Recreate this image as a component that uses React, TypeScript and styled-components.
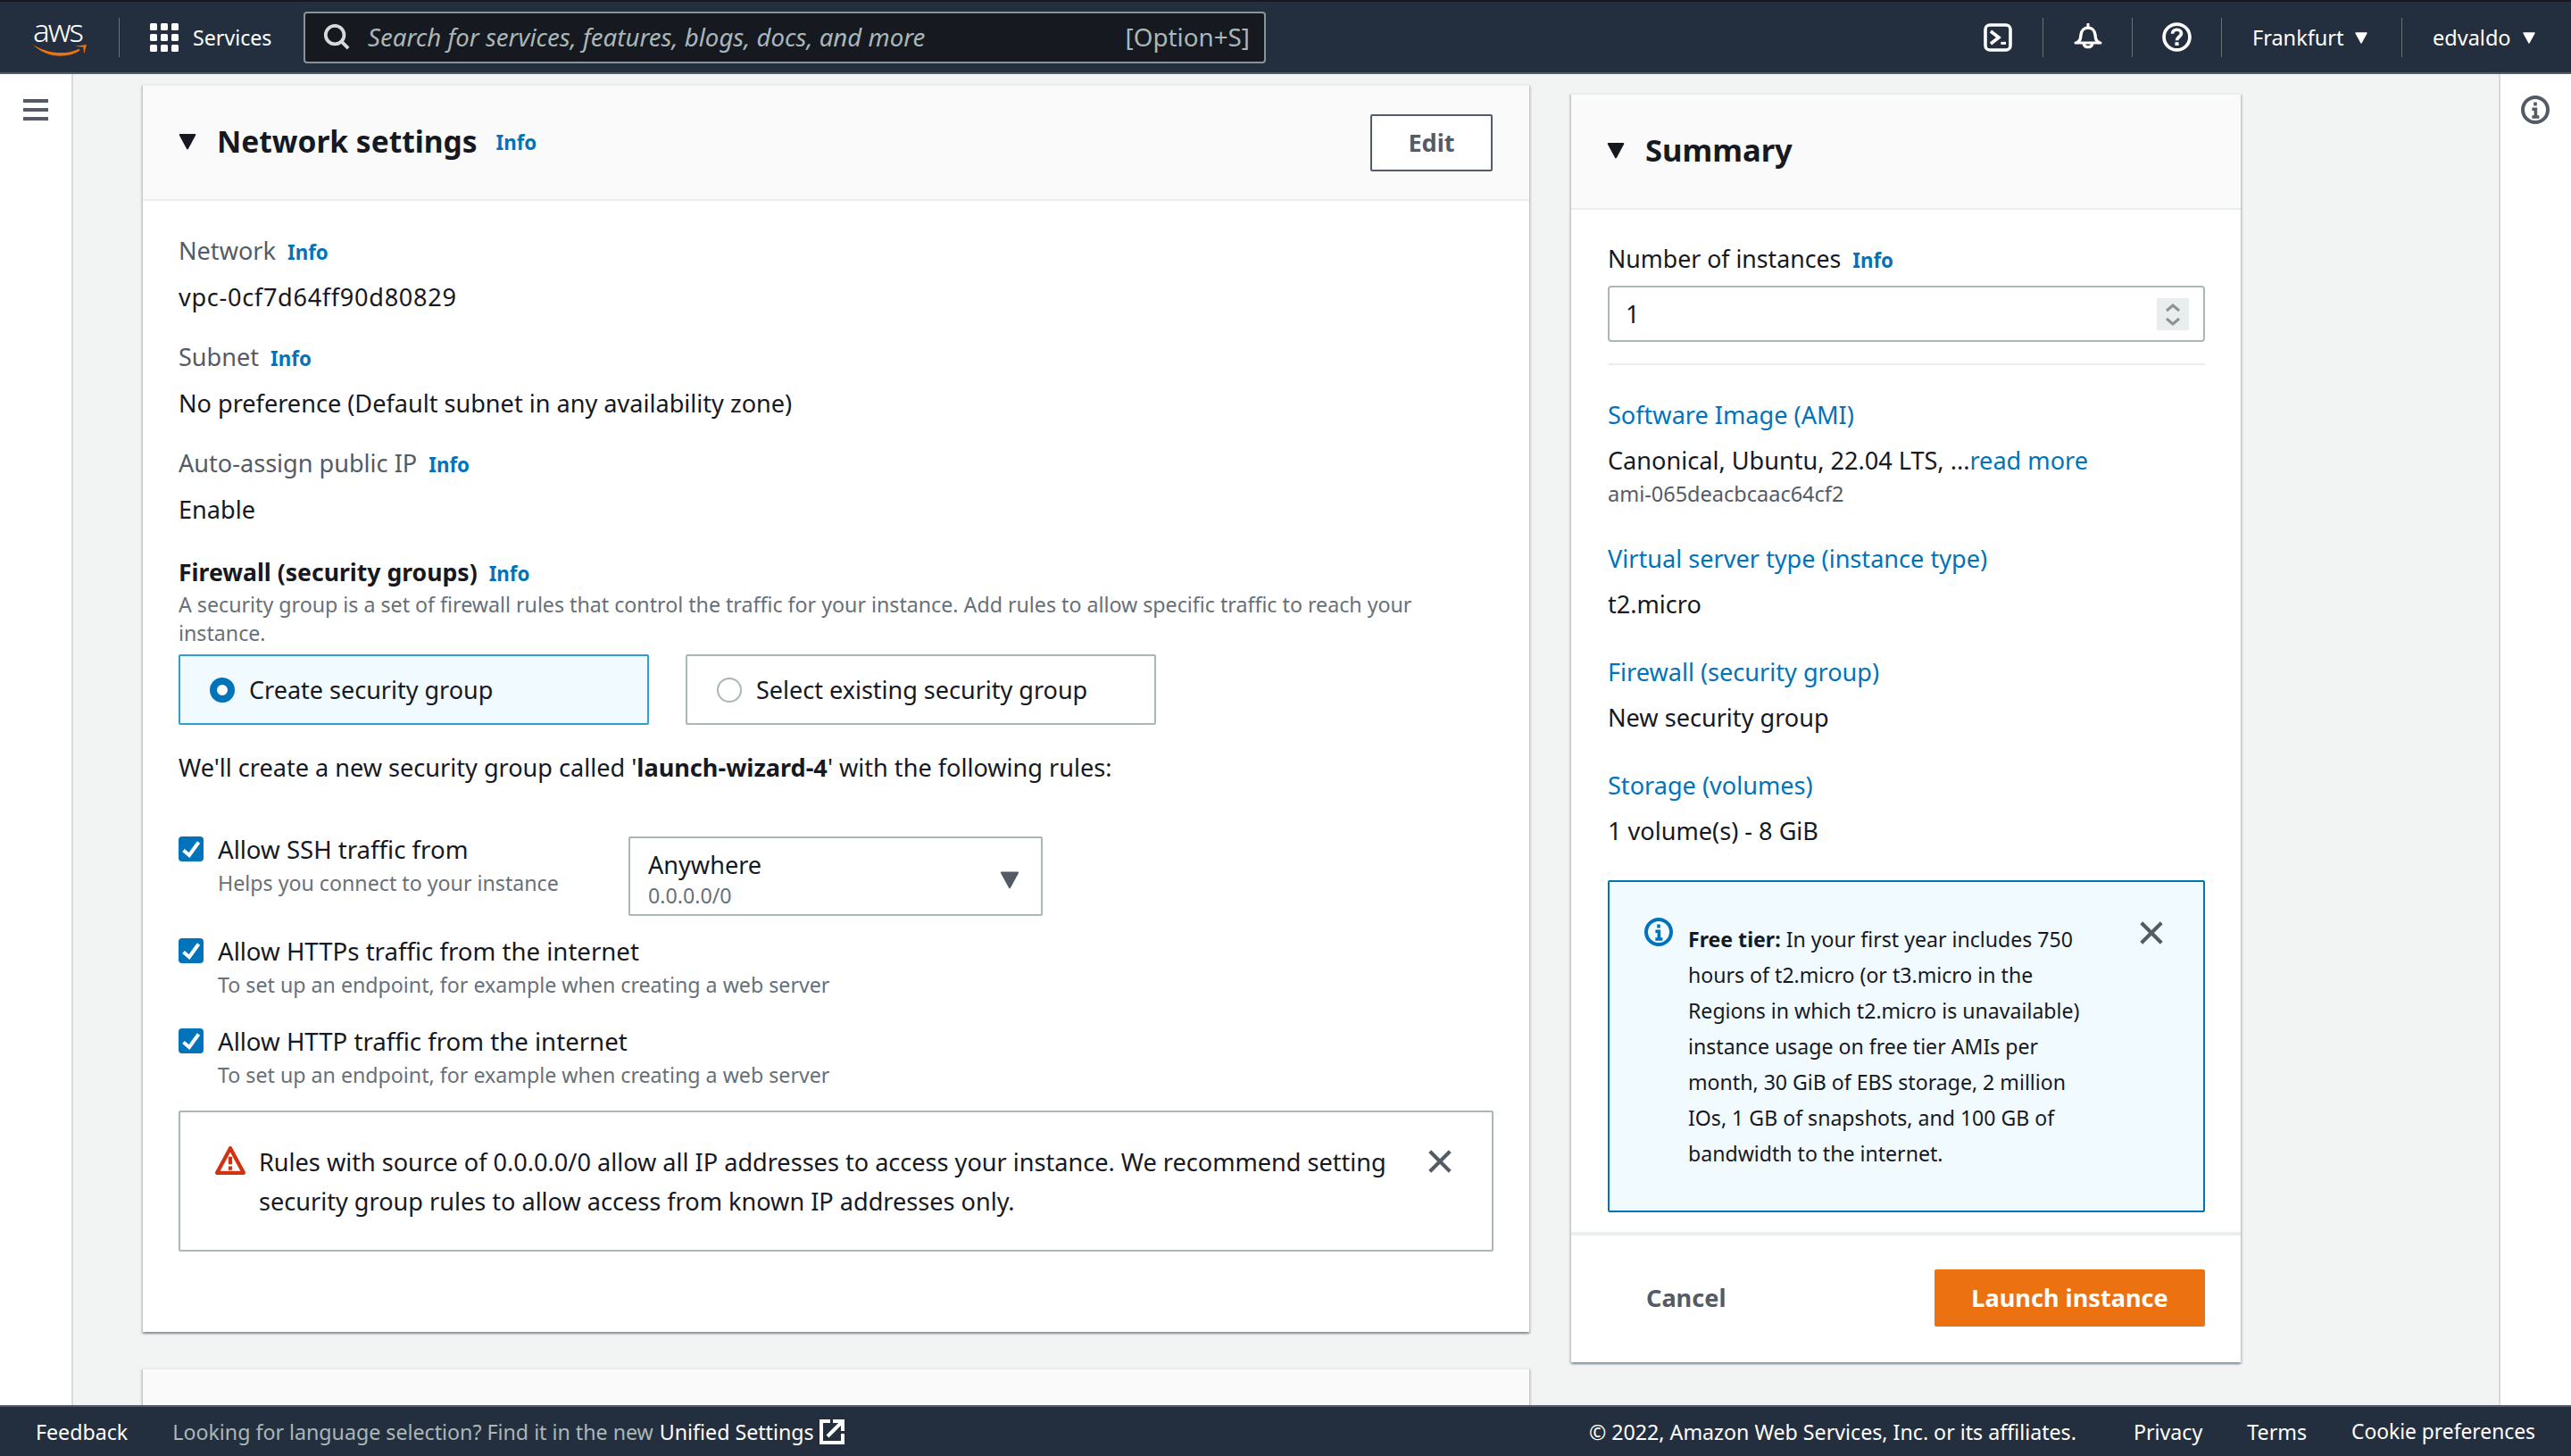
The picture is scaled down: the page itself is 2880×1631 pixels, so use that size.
import React from 'react';
import styled, { createGlobalStyle } from 'styled-components';

const FONT = `"Noto Sans", Lato, sans-serif`;
const B = 27.1;
const S = 23.2;
const H = 33.5;

const Global = createGlobalStyle`
  html, body { margin: 0; padding: 0; height: 100%; overflow: hidden; }
  #root { height: 100%; }
  * { box-sizing: border-box; }
  body { font-family: ${FONT}; font-size: ${B}px; line-height: 44px; color: #16191f; background: #f2f3f3; }
`;

const Page = styled.div`
  height: 100vh;
  display: flex;
  flex-direction: column;
  overflow: hidden;
`;

/* ---------- top bar ---------- */
const TopBar = styled.header`
  flex: 0 0 83px;
  display: flex;
  align-items: center;
  background: #232f3e;
  border-top: 2px solid #16191f;
  border-bottom: 2px solid #545b64;
  color: #fff;
  font-size: ${S}px;
`;
const Logo = styled.div`
  width: 133px;
  padding-left: 35px;
  display: flex;
  flex-direction: column;
  align-items: flex-start;
  height: 44px;
`;
const LogoText = styled.span`
  font-size: 35px;
  font-weight: 300;
  line-height: 27px;
  letter-spacing: -2px;
  margin-left: 2px;
  color: #fff;
`;
const Divider = styled.span`
  width: 1px;
  height: 44px;
  background: #687078;
  flex: none;
`;
const ServicesBtn = styled.div`
  display: flex;
  align-items: center;
  gap: 16px;
  margin-left: 34px;
  width: 172px;
  font-size: 23.2px;
`;
const SearchBox = styled.div`
  width: 1078px;
  height: 58px;
  background: #16191f;
  border: 2px solid #879596;
  border-radius: 4px;
  display: flex;
  align-items: center;
  padding: 0 16px 2px 20px;
  color: #aab7b8;
`;
const SearchText = styled.span`
  font-style: italic;
  font-size: 27.6px;
  margin-left: 20px;
  flex: 1;
`;
const SearchHint = styled.span`
  font-size: 27.8px;
`;
const TopRight = styled.div`
  margin-left: auto;
  display: flex;
  align-items: center;
`;
const IconCell = styled.div<{ $first?: boolean }>`
  width: 100px;
  height: 44px;
  display: flex;
  align-items: center;
  justify-content: center;
  border-left: ${(p) => (p.$first ? 'none' : '1px solid #687078')};
`;
const MenuCell = styled.div<{ $w: number }>`
  width: ${(p) => p.$w}px;
  height: 44px;
  border-left: 1px solid #687078;
  display: flex;
  align-items: center;
  gap: 12px;
  padding-left: 34px;
  font-size: 23.5px;
`;

/* ---------- shell ---------- */
const Shell = styled.div`
  flex: 1;
  min-height: 0;
  display: flex;
`;
const Rail = styled.aside<{ $side: 'left' | 'right' }>`
  flex: 0 0 ${(p) => (p.$side === 'left' ? 82 : 81)}px;
  background: #fff;
  display: flex;
  justify-content: center;
  padding-top: ${(p) => (p.$side === 'left' ? 28 : 24)}px;
  ${(p) => (p.$side === 'left' ? 'border-right: 2px solid #d5dbdb;' : 'border-left: 2px solid #d5dbdb; padding-right: 2px;')}
`;
const Main = styled.main`
  flex: 1;
  min-width: 0;
  display: flex;
  gap: 47px;
  padding: 11px 0 0 78px;
  overflow: hidden;
  align-items: flex-start;
`;
const LeftColumn = styled.div`
  flex: 0 0 1553px;
  display: flex;
  flex-direction: column;
  gap: 40px;
`;
const Panel = styled.section`
  background: #fff;
  border-top: 2px solid #eaeded;
  box-shadow: 0 2px 2px 0 rgba(0, 28, 36, 0.3), 2px 2px 2px 0 rgba(0, 28, 36, 0.12), -2px 2px 2px 0 rgba(0, 28, 36, 0.12);
`;
const PanelHead = styled.div`
  display: flex;
  align-items: center;
  background: #fafafa;
  border-bottom: 2px solid #eaeded;
  height: 129px;
  padding: 0 41px 4px 39px;
  gap: 22px;
`;
const PanelTitle = styled.h2`
  margin: 0;
  font-size: ${H}px;
  line-height: 44px;
  font-weight: 700;
  color: #16191f;
`;
const SummaryTitle = styled(PanelTitle)`
  font-size: 34.6px;
`;
const Info = styled.a`
  font-size: 22.3px;
  line-height: 32px;
  font-weight: 700;
  color: #0073bb;
  margin-left: 13px;
`;
const HeadInfo = styled(Info)`
  margin-left: -1px;
  margin-top: 5px;
`;
const EditButton = styled.button`
  margin-left: auto;
  width: 137px;
  height: 64px;
  margin-top: 4px;
  background: #fff;
  border: 2px solid #545b64;
  border-radius: 2px;
  font: 700 ${B}px/44px ${FONT};
  color: #545b64;
`;
const PanelBody = styled.div`
  padding: 34px 40px 90px;
`;
const Field = styled.div<{ $gap?: number }>`
  margin-bottom: ${(p) => p.$gap ?? 24}px;
`;
const FieldLabel = styled.div`
  font-size: ${B}px;
  line-height: 44px;
  color: #545b64;
  margin-bottom: 7px;
`;
const FieldValue = styled.div<{ $spaced?: boolean }>`
  font-size: ${B}px;
  line-height: 44px;
  padding-top: 1px;
  margin-bottom: -1px;
  letter-spacing: ${(p) => (p.$spaced ? '0.7px' : 'normal')};
`;
const FirewallLabel = styled.div`
  font-size: 26.6px;
  line-height: 44px;
  font-weight: 700;
`;
const Description = styled.div`
  font-size: ${S}px;
  line-height: 32px;
  color: #687078;
  width: 1420px;
  margin-top: -2px;
`;
const Cards = styled.div`
  display: flex;
  gap: 41px;
  margin-top: 8px;
`;
const RadioCard = styled.div<{ $on?: boolean }>`
  width: 527px;
  height: 79px;
  border: 2px solid ${(p) => (p.$on ? '#2f9fd0' : '#aab7b8')};
  border-radius: 2px;
  background: ${(p) => (p.$on ? '#f1faff' : '#fff')};
  display: flex;
  align-items: center;
  gap: 16px;
  padding-left: 33px;
  font-size: 27px;
`;
const RadioDot = styled.span<{ $on?: boolean }>`
  width: 28px;
  height: 28px;
  border-radius: 50%;
  background: #fff;
  border: ${(p) => (p.$on ? '8px solid #0073bb' : '2px solid #aab7b8')};
  flex: none;
`;
const Lead = styled.p`
  margin: 26px 0 47px;
  font-size: ${B}px;
  line-height: 44px;
`;
const CheckRow = styled.div<{ $gap: number }>`
  display: flex;
  align-items: flex-start;
  margin-bottom: ${(p) => p.$gap}px;
`;
const CheckBox = styled.span`
  width: 28px;
  height: 28px;
  margin-top: 8px;
  background: #0073bb;
  border-radius: 4px;
  display: flex;
  flex: none;
`;
const CheckText = styled.div`
  margin-left: 16px;
  width: 460px;
`;
const CheckLabel = styled.div`
  font-size: 27.6px;
  line-height: 44px;
  white-space: nowrap;
`;
const CheckHint = styled.div`
  font-size: ${S}px;
  line-height: 32px;
  color: #687078;
  white-space: nowrap;
`;
const SelectBox = styled.div`
  width: 464px;
  height: 89px;
  margin-top: 8px;
  border: 2px solid #aab7b8;
  border-radius: 2px;
  padding: 6px 23px 0 20px;
  display: flex;
  justify-content: space-between;
  align-items: center;
`;
const SelectMain = styled.div`
  font-size: ${B}px;
  line-height: 36px;
`;
const SelectSub = styled.div`
  font-size: ${S}px;
  line-height: 32px;
  color: #687078;
`;
const Alert = styled.div`
  display: flex;
  align-items: flex-start;
  border: 2px solid #aab7b8;
  border-radius: 2px;
  padding: 34px 43px 32px 39px;
  background: #fff;
`;
const AlertText = styled.div`
  flex: 1;
  margin-left: 15px;
  font-size: ${B}px;
  line-height: 44px;
`;
const NextPanel = styled(Panel)`
  height: 120px;
  background: #fafafa;
`;
const SummaryPanel = styled(Panel)`
  flex: 0 0 750px;
  margin-top: 10px;
`;
const SummaryBody = styled.div`
  padding: 33px 40px 22px 41px;
`;
const NumberLabel = styled.div`
  font-size: 26.7px;
`;
const InputBox = styled.div`
  height: 63px;
  border: 2px solid #aab7b8;
  border-radius: 4px;
  margin-top: 8px;
  display: flex;
  align-items: center;
  justify-content: space-between;
  padding: 0 16px 0 18px;
`;
const Rule = styled.div`
  height: 2px;
  background: #eaeded;
  margin: 24px 0 34px;
`;
const SideLink = styled.a`
  display: block;
  font-size: ${B}px;
  line-height: 44px;
  color: #0073bb;
  margin-bottom: 7px;
`;
const SideBlock = styled.div`
  margin-bottom: 32px;
`;
const SideValue = styled.div`
  font-size: ${B}px;
  line-height: 44px;
`;
const InlineLink = styled.span`
  color: #0073bb;
`;
const AmiId = styled.div`
  font-size: 23.5px;
  line-height: 32px;
  margin-top: -1px;
  padding-bottom: 3px;
  color: #545b64;
`;
const TierBox = styled.div`
  display: flex;
  align-items: flex-start;
  height: 372px;
  margin-top: 33px;
  border: 2px solid #0073bb;
  border-radius: 2px;
  background: #f1faff;
  padding: 40px 43px 0 39px;
`;
const TierText = styled.div`
  flex: 1;
  margin: 4px 0 0 17px;
  font-size: 23.1px;
  line-height: 40px;
  white-space: nowrap;
`;
const SummaryFoot = styled.div`
  border-top: 4px solid #eaeded;
  height: 146px;
  display: flex;
  align-items: center;
  justify-content: space-between;
  padding: 0 40px 2px 84px;
`;
const CancelLink = styled.span`
  font-weight: 700;
  font-size: ${B}px;
  color: #545b64;
`;
const LaunchButton = styled.button`
  width: 303px;
  height: 64px;
  border: 0;
  border-radius: 2px;
  background: #ec7211;
  color: #fff;
  font: 700 ${B}px/44px ${FONT};
`;

/* ---------- footer ---------- */
const Footer = styled.footer`
  flex: 0 0 57px;
  background: #232f3e;
  border-top: 2px solid #545b64;
  display: flex;
  align-items: center;
  padding: 0 40px;
  font-size: ${S}px;
  color: #fff;
  white-space: nowrap;
`;
const FootNote = styled.span`
  margin-left: 50px;
  color: #aab7b8;
  display: flex;
  align-items: center;
`;
const FootStrong = styled.span`
  color: #fff;
  margin-left: 7px;
  margin-right: 6px;
`;
const FootRight = styled.div`
  margin-left: auto;
  display: flex;
  gap: 50px;
`;
const Copyright = styled.span`
  margin-right: 14px;
`;
const CookieLink = styled.span`
  font-size: 22.8px;
`;

/* ---------- icons ---------- */
const Caret = ({ size = 16, color = '#fff' }: { size?: number; color?: string }) => (
  <svg width={size} height={size} viewBox="0 0 16 16" style={{ flex: 'none' }}>
    <path d="M2 3h12L8 14z" fill={color} stroke={color} strokeWidth="1.5" strokeLinejoin="round" />
  </svg>
);
const CloseIcon = styled.svg<{ $top: number }>`
  flex: none;
  margin-top: ${(p) => p.$top}px;
`;
const Close = ({ top }: { top: number }) => (
  <CloseIcon $top={top} width="30" height="30" viewBox="0 0 16 16">
    <path d="M2 2l12 12M14 2L2 14" fill="none" stroke="#545b64" strokeWidth="2.2" />
  </CloseIcon>
);
const InfoCircle = ({ color }: { color: string }) => (
  <svg width="32" height="32" viewBox="0 0 16 16" style={{ flex: 'none' }}>
    <circle cx="8" cy="8" r="7" fill="none" stroke={color} strokeWidth="2" />
    <path d="M8 3.800v2M6.200 7.600H8.200V12M6.200 12h4" fill="none" stroke={color} strokeWidth="1.800" />
  </svg>
);
const Tick = () => (
  <svg width="28" height="28" viewBox="0 0 28 28">
    <path d="M5.500 15.500l6.500 5.500L22.500 6.500" fill="none" stroke="#fff" strokeWidth="4" />
  </svg>
);
const AlertIcon = styled.svg`
  flex: none;
  margin-top: 3px;
`;

const Row = ({ label, hint, gap, children }: { label: string; hint: string; gap: number; children?: React.ReactNode }) => (
  <CheckRow $gap={gap}>
    <CheckBox><Tick /></CheckBox>
    <CheckText>
      <CheckLabel>{label}</CheckLabel>
      <CheckHint>{hint}</CheckHint>
    </CheckText>
    {children}
  </CheckRow>
);

export default function App() {
  return (
    <Page>
      <Global />
      <TopBar>
        <Logo>
          <LogoText>aws</LogoText>
          <svg width="65" height="16" viewBox="0 0 65 16" style={{ marginTop: 2 }}>
            <path d="M0 1C14 10 36 15 55 6L56 8C40 19 14 16 0 1z" fill="#ec7211" />
            <path d="M50 3L64 1L61 12L60 4z" fill="#ec7211" />
          </svg>
        </Logo>
        <Divider />
        <ServicesBtn>
          <svg width="32" height="32" viewBox="0 0 32 32">
            {[0, 12, 24].flatMap((y) => [0, 12, 24].map((x) => <rect key={`${x}-${y}`} x={x} y={y} width="8" height="8" rx="1.500" fill="#fff" />))}
          </svg>
          Services
        </ServicesBtn>
        <SearchBox>
          <svg width="30" height="30" viewBox="0 0 16 16">
            <circle cx="7" cy="7" r="5.500" fill="none" stroke="#d5dbdb" strokeWidth="2" />
            <path d="M11 11l4 4" stroke="#d5dbdb" strokeWidth="2" />
          </svg>
          <SearchText>Search for services, features, blogs, docs, and more</SearchText>
          <SearchHint>[Option+S]</SearchHint>
        </SearchBox>
        <TopRight>
          <IconCell $first>
            <svg width="32" height="32" viewBox="0 0 16 16">
              <rect x="1" y="1" width="14" height="14" rx="2.500" fill="none" stroke="#fff" strokeWidth="1.800" />
              <path d="M4 4.500L8.500 8L4 11.500" fill="none" stroke="#fff" strokeWidth="1.800" />
              <path d="M9.700 11.200h2.800" stroke="#fff" strokeWidth="1.500" />
            </svg>
          </IconCell>
          <IconCell>
            <svg width="32" height="32" viewBox="0 0 16 16">
              <path d="M8 .5v2M1 11h14" stroke="#fff" strokeWidth="1.500" strokeLinecap="round" />
              <path d="M1.500 11C3.500 10 3.800 9 4 6.500C4.200 4 6 2.500 8 2.500C10 2.500 11.800 4 12 6.500C12.200 9 12.500 10 14.500 11" fill="none" stroke="#fff" strokeWidth="1.700" />
              <path d="M5.500 11.500a2.600 2.600 0 0 0 5 0" fill="none" stroke="#fff" strokeWidth="1.600" />
            </svg>
          </IconCell>
          <IconCell>
            <svg width="33" height="33" viewBox="0 0 16 16">
              <circle cx="8" cy="8" r="7" fill="none" stroke="#fff" strokeWidth="1.800" />
              <path d="M5.600 6.200C5.600 4.800 6.700 4 8 4s2.400.8 2.400 2.100c0 1.800-2.400 1.800-2.400 3.700" fill="none" stroke="#fff" strokeWidth="1.800" />
              <path d="M8 10.800v1.800" stroke="#fff" strokeWidth="2" />
            </svg>
          </IconCell>
          <MenuCell $w={202}>Frankfurt <Caret /></MenuCell>
          <MenuCell $w={190}>edvaldo <Caret /></MenuCell>
        </TopRight>
      </TopBar>
      <Shell>
        <Rail $side="left">
          <svg width="28" height="24" viewBox="0 0 28 24">
            <path d="M0 2h28M0 12h28M0 22h28" stroke="#545b64" strokeWidth="4" />
          </svg>
        </Rail>
        <Main>
          <LeftColumn>
            <Panel>
              <PanelHead>
                <Caret size={22} color="#16191f" />
                <PanelTitle>Network settings</PanelTitle>
                <HeadInfo>Info</HeadInfo>
                <EditButton>Edit</EditButton>
              </PanelHead>
              <PanelBody>
                <Field>
                  <FieldLabel>Network<Info>Info</Info></FieldLabel>
                  <FieldValue $spaced>vpc-0cf7d64ff90d80829</FieldValue>
                </Field>
                <Field>
                  <FieldLabel>Subnet<Info>Info</Info></FieldLabel>
                  <FieldValue>No preference (Default subnet in any availability zone)</FieldValue>
                </Field>
                <Field $gap={27}>
                  <FieldLabel>Auto-assign public IP<Info>Info</Info></FieldLabel>
                  <FieldValue>Enable</FieldValue>
                </Field>
                <FirewallLabel>Firewall (security groups)<Info>Info</Info></FirewallLabel>
                <Description>A security group is a set of firewall rules that control the traffic for your instance. Add rules to allow specific traffic to reach your instance.</Description>
                <Cards>
                  <RadioCard $on><RadioDot $on />Create security group</RadioCard>
                  <RadioCard><RadioDot />Select existing security group</RadioCard>
                </Cards>
                <Lead>We'll create a new security group called '<b>launch-wizard-4</b>' with the following rules:</Lead>
                <Row label="Allow SSH traffic from" hint="Helps you connect to your instance" gap={17}>
                  <SelectBox>
                    <div>
                      <SelectMain>Anywhere</SelectMain>
                      <SelectSub>0.0.0.0/0</SelectSub>
                    </div>
                    <Caret size={24} color="#545b64" />
                  </SelectBox>
                </Row>
                <Row label="Allow HTTPs traffic from the internet" hint="To set up an endpoint, for example when creating a web server" gap={25} />
                <Row label="Allow HTTP traffic from the internet" hint="To set up an endpoint, for example when creating a web server" gap={24} />
                <Alert>
                  <AlertIcon width="34" height="34" viewBox="0 0 16 16">
                    <path d="M8 1.500L1 14.500h14z" fill="none" stroke="#d13212" strokeWidth="2" strokeLinejoin="round" />
                    <path d="M7 6h2v4H7zM7 11h2v2H7z" fill="#d13212" />
                  </AlertIcon>
                  <AlertText>Rules with source of 0.0.0.0/0 allow all IP addresses to access your instance. We recommend setting security group rules to allow access from known IP addresses only.</AlertText>
                  <Close top={6} />
                </Alert>
              </PanelBody>
            </Panel>
            <NextPanel />
          </LeftColumn>
          <SummaryPanel>
            <PanelHead>
              <Caret size={22} color="#16191f" />
              <SummaryTitle>Summary</SummaryTitle>
            </PanelHead>
            <SummaryBody>
              <NumberLabel>Number of instances<Info>Info</Info></NumberLabel>
              <InputBox>
                1
                <svg width="36" height="36" viewBox="0 0 36 36">
                  <rect width="36" height="36" fill="#eaeded" />
                  <path d="M11 14l7-6 7 6M11 23l7 6 7-6" fill="none" stroke="#879596" strokeWidth="3" />
                </svg>
              </InputBox>
              <Rule />
              <SideBlock>
                <SideLink>Software Image (AMI)</SideLink>
                <SideValue>Canonical, Ubuntu, 22.04 LTS, ...<InlineLink>read more</InlineLink></SideValue>
                <AmiId>ami-065deacbcaac64cf2</AmiId>
              </SideBlock>
              <SideBlock>
                <SideLink>Virtual server type (instance type)</SideLink>
                <SideValue>t2.micro</SideValue>
              </SideBlock>
              <SideBlock>
                <SideLink>Firewall (security group)</SideLink>
                <SideValue>New security group</SideValue>
              </SideBlock>
              <SideLink>Storage (volumes)</SideLink>
              <SideValue>1 volume(s) - 8 GiB</SideValue>
              <TierBox>
                <InfoCircle color="#0073bb" />
                <TierText>
                  <b>Free tier:</b> In your first year includes 750<br />
                  hours of t2.micro (or t3.micro in the<br />
                  Regions in which t2.micro is unavailable)<br />
                  instance usage on free tier AMIs per<br />
                  month, 30 GiB of EBS storage, 2 million<br />
                  IOs, 1 GB of snapshots, and 100 GB of<br />
                  bandwidth to the internet.
                </TierText>
                <Close top={2} />
              </TierBox>
            </SummaryBody>
            <SummaryFoot>
              <CancelLink>Cancel</CancelLink>
              <LaunchButton>Launch instance</LaunchButton>
            </SummaryFoot>
          </SummaryPanel>
        </Main>
        <Rail $side="right">
          <InfoCircle color="#545b64" />
        </Rail>
      </Shell>
      <Footer>
        Feedback
        <FootNote>
          Looking for language selection? Find it in the new
          <FootStrong>Unified Settings</FootStrong>
          <svg width="28" height="28" viewBox="0 0 28 28">
            <path d="M12 2H2V26H26V16" fill="none" stroke="#fff" strokeWidth="4" />
            <path d="M9 19L25 3M15 2H26V13" fill="none" stroke="#fff" strokeWidth="4" />
          </svg>
        </FootNote>
        <FootRight>
          <Copyright>© 2022, Amazon Web Services, Inc. or its affiliates.</Copyright>
          <span>Privacy</span>
          <span>Terms</span>
          <CookieLink>Cookie preferences</CookieLink>
        </FootRight>
      </Footer>
    </Page>
  );
}
